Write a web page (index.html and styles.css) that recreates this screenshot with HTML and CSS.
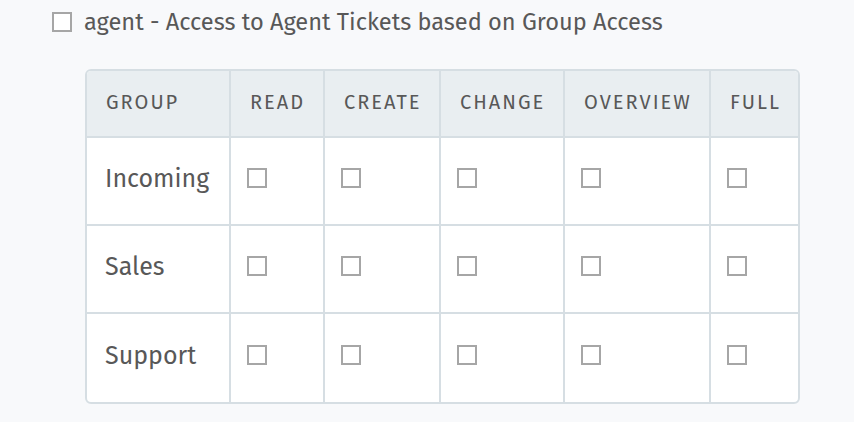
FILE: index.html
```html
<!DOCTYPE html>
<html>
<head>
<meta charset="utf-8">
<link rel="stylesheet" href="styles.css">
</head>
<body>
<div class="page">
  <label class="role">
    <span class="box"></span>
    <span class="role-text">agent - Access to Agent Tickets based on Group Access</span>
  </label>
  <div class="grid">
    <div class="cell head">GROUP</div>
    <div class="cell head">READ</div>
    <div class="cell head">CREATE</div>
    <div class="cell head">CHANGE</div>
    <div class="cell head">OVERVIEW</div>
    <div class="cell head last">FULL</div>

    <div class="cell name">Incoming</div>
    <div class="cell"><span class="box"></span></div>
    <div class="cell"><span class="box"></span></div>
    <div class="cell"><span class="box"></span></div>
    <div class="cell"><span class="box"></span></div>
    <div class="cell last"><span class="box"></span></div>

    <div class="cell name">Sales</div>
    <div class="cell"><span class="box"></span></div>
    <div class="cell"><span class="box"></span></div>
    <div class="cell"><span class="box"></span></div>
    <div class="cell"><span class="box"></span></div>
    <div class="cell last"><span class="box"></span></div>

    <div class="cell name bottom">Support</div>
    <div class="cell bottom"><span class="box"></span></div>
    <div class="cell bottom"><span class="box"></span></div>
    <div class="cell bottom"><span class="box"></span></div>
    <div class="cell bottom"><span class="box"></span></div>
    <div class="cell bottom last"><span class="box"></span></div>
  </div>
</div>
</body>
</html>
```

FILE: styles.css
```css
html, body {
  margin: 0;
  padding: 0;
  background: #f8f9fb;
}
body {
  font-family: "Fira Sans", "Open Sans", "Noto Sans", sans-serif;
  color: #585858;
}
.page {
  padding: 9px 0 0 52px;
}
.role {
  display: flex;
  align-items: center;
  gap: 12px;
  height: 26px;
}
.role-text {
  font-size: 23.6px;
  line-height: 26px;
}
.box {
  display: inline-block;
  width: 16px;
  height: 16px;
  border: 2px solid #a6a6a6;
  background: #fff;
  box-sizing: content-box;
}
.grid {
  margin: 34px 0 0 33px;
  width: 715px;
  box-sizing: border-box;
  border: 2px solid #d6dee3;
  border-radius: 6px;
  overflow: hidden;
  background: #fff;
  display: grid;
  grid-template-columns: 144px 94px 116px 124px 146px 1fr;
  grid-template-rows: 67px 88px 88px 88px;
}
.cell {
  border-right: 2px solid #d6dee3;
  border-bottom: 2px solid #d6dee3;
  display: flex;
  align-items: center;
  padding-left: 16px;
  box-sizing: border-box;
}
.cell .box {
  margin-bottom: 6px;
}
.cell.last {
  border-right: none;
}
.cell.bottom {
  border-bottom: none;
}
.head {
  background: #e9eef1;
  font-size: 20px;
  letter-spacing: 2px;
  padding-left: 19px;
  padding-bottom: 3px;
}
.name {
  font-size: 25px;
  padding-left: 18px;
  padding-bottom: 4px;
}
```
